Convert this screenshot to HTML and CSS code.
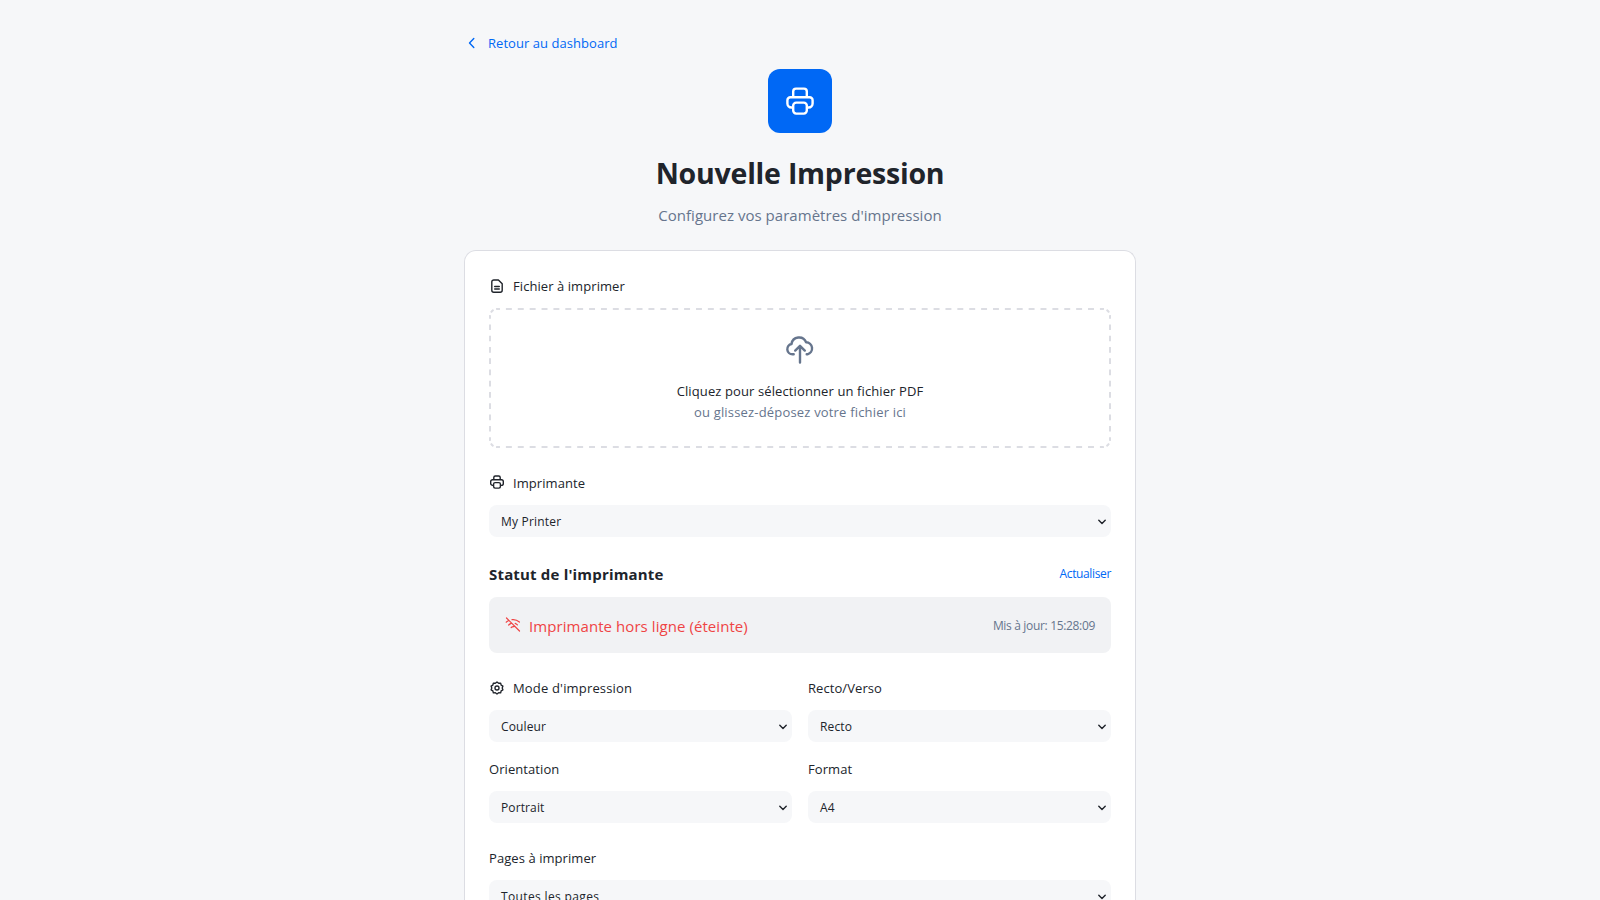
FILE: index.html
```html
<!DOCTYPE html>
<html lang="fr">
<head>
<meta charset="utf-8">
<title>Nouvelle Impression</title>
<link rel="stylesheet" href="styles.css">
</head>
<body>
<main class="page">
  <a class="back"><svg class="back-icon" viewBox="0 0 16 16"><path d="M9.800 3.500 5.500 8l4.300 4.500"/></svg><span class="t-back">Retour au dashboard</span></a>
  <header class="hero">
    <div class="logo"><svg class="logo-icon" viewBox="0 0 32 32"><path d="M9.200 12V6.400a2.800 2.800 0 0 1 2.800-2.800h8a2.800 2.800 0 0 1 2.800 2.800V12M8.400 22.500H7.400a4 4 0 0 1-4-4V15.200a3 3 0 0 1 3-3h19.200a3 3 0 0 1 3 3v3.300a4 4 0 0 1-4 4h-1"/><rect x="9.200" y="17.600" width="13.600" height="11" rx="3"/></svg></div>
    <h1 class="title">Nouvelle Impression</h1>
    <p class="subtitle">Configurez vos paramètres d'impression</p>
  </header>
  <section class="card">
    <div class="label"><svg class="icon" viewBox="0 0 16 16"><path d="M9.400 2H4.800a2 2 0 0 0-2 2v8.300a2 2 0 0 0 2 2h6.400a2 2 0 0 0 2-2V5.800zM5.700 8.500h4.600M5.700 11h4.600"/></svg><span class="t-file">Fichier à imprimer</span></div>
    <div class="dropzone">
      <svg class="dashes" viewBox="0 0 622 140"><path class="dash-h" d="M8 1h606M8 139h606"/><path class="dash-v" d="M1 8v124M621 8v124"/><path class="dash-c" d="M1 8a7 7 0 0 1 7-7M614 1a7 7 0 0 1 7 7M621 132a7 7 0 0 1-7 7M8 139a7 7 0 0 1-7-7"/></svg>
      <svg class="cloud" viewBox="0 0 32 32"><path d="M9.700 22.300H8.400a5.200 5.200 0 0 1-.9-10.300 7.600 7.600 0 0 1 14.600-1.700 6.100 6.100 0 0 1 1.400 12h-.8M16 30.500V14.200M11.200 18.600 16 13.800l4.800 4.800"/></svg>
      <p class="drop-main">Cliquez pour sélectionner un fichier PDF</p>
      <p class="drop-hint">ou glissez-déposez votre fichier ici</p>
    </div>
    <div class="label label-printer"><svg class="icon icon-up" viewBox="0 0 16 16"><path d="M4.800 5.600V3.500a1.500 1.500 0 0 1 1.500-1.500h3.400a1.500 1.500 0 0 1 1.500 1.500v2.100M4.300 11.400H3.700a2 2 0 0 1-2-2V7.600a1.800 1.800 0 0 1 1.800-1.800h9a1.800 1.800 0 0 1 1.800 1.800v1.800a2 2 0 0 1-2 2h-.6"/><rect x="4.600" y="8.600" width="6.800" height="5.500" rx="1.500"/></svg><span class="t-printer">Imprimante</span></div>
    <div class="select"><span class="t-myprinter">My Printer</span><svg class="chev" viewBox="0 0 8 6"><path d="m.8 1.200 3.200 3.200 3.200-3.200"/></svg></div>
    <div class="status-head"><h2 class="status-title">Statut de l'imprimante</h2><a class="refresh">Actualiser</a></div>
    <div class="status-box"><svg class="wifi" viewBox="0 0 16 16"><path d="m1.500 2 13 13M1.200 6.200a12 12 0 0 1 2.500-1.700M7 3.700c2.800-.4 5.300.5 7.400 2.300M3.700 9A7.500 7.500 0 0 1 6 7.400M10.200 7.400c.8.300 1.500.8 2.200 1.500M6.200 11.500a3.500 3.500 0 0 1 2.600-.8"/></svg><span class="status-text">Imprimante hors ligne (éteinte)</span><span class="updated">Mis à jour: 15:28:09</span></div>
    <div class="grid">
      <div class="field"><div class="label"><svg class="icon" viewBox="-.3 -.3 16.600 16.600"><path d="M8 1.800 9.700 3.100l2.100-.2.500 2.100 1.800 1.100L13.400 8l.7 1.900-1.800 1.100-.5 2.100-2.100-.2L8 14.200l-1.700-1.300-2.100.2-.5-2.100-1.800-1.100L2.600 8l-.7-1.900L3.700 5l.5-2.100 2.100.2z"/><circle cx="8" cy="8" r="2.100"/></svg><span class="t-mode">Mode d'impression</span></div><div class="select"><span>Couleur</span><svg class="chev" viewBox="0 0 8 6"><path d="m.8 1.200 3.200 3.200 3.200-3.200"/></svg></div></div>
      <div class="field"><div class="label"><span>Recto/Verso</span></div><div class="select"><span>Recto</span><svg class="chev" viewBox="0 0 8 6"><path d="m.8 1.200 3.200 3.200 3.200-3.200"/></svg></div></div>
      <div class="field"><div class="label"><span>Orientation</span></div><div class="select"><span>Portrait</span><svg class="chev" viewBox="0 0 8 6"><path d="m.8 1.200 3.200 3.200 3.200-3.200"/></svg></div></div>
      <div class="field"><div class="label"><span>Format</span></div><div class="select"><span>A4</span><svg class="chev" viewBox="0 0 8 6"><path d="m.8 1.200 3.200 3.200 3.200-3.200"/></svg></div></div>
    </div>
    <div class="label label-pages"><span>Pages à imprimer</span></div>
    <div class="select"><span class="t-all">Toutes les pages</span><svg class="chev" viewBox="0 0 8 6"><path d="m.8 1.200 3.200 3.200 3.200-3.200"/></svg></div>
  </section>
</main>
</body>
</html>
```
FILE: styles.css
```css
* { box-sizing: border-box; margin: 0; }
html { height: 900px; overflow: hidden; }
body { height: 900px; overflow: hidden; background: #f6f7f9; color: #20242b; font-family: "Open Sans", "Noto Sans", sans-serif; font-size: 13px; line-height: 20px; }
svg { display: block; flex: none; fill: none; stroke: currentColor; stroke-width: 1.4; stroke-linecap: round; stroke-linejoin: round; }
.page { display: flex; flex-direction: column; width: 672px; height: 900px; margin: 0 auto; padding-top: 33px; }
.back { display: flex; align-items: center; width: max-content; letter-spacing: .05px; color: #0068f5; }
.back-icon { width: 16px; height: 16px; margin-right: 8px; }
.hero { display: flex; flex-direction: column; align-items: center; padding-top: 16px; }
.logo { display: grid; place-items: center; width: 64px; height: 64px; border-radius: 12px; background: #0068f5; color: #fff; }
.logo-icon { width: 32px; height: 32px; stroke-width: 2.4; }
.title { margin-top: 20px; font-size: 28.5px; line-height: 40px; font-weight: 700; letter-spacing: -.22px; }
.subtitle { margin-top: 10px; font-size: 15px; line-height: 24px; letter-spacing: .03px; color: #66758d; }
.card { flex: 1; min-height: 0; overflow: hidden; margin-top: 23px; padding: 25px 24px 0; border: 1px solid #dcdde3; border-bottom: 0; border-radius: 12px 12px 0 0; background: #fff; }
.label { display: flex; align-items: center; height: 20px; letter-spacing: .07px; }
.t-mode { letter-spacing: .17px; }
.icon { width: 16px; height: 16px; margin-right: 8px; }
.icon-up { margin-bottom: 2px; }
.dropzone { position: relative; display: flex; flex-direction: column; align-items: center; height: 140px; margin-top: 12px; padding-top: 24px; border-radius: 8px; }
.dashes { position: absolute; inset: 0; width: 622px; height: 140px; color: #dcdde3; stroke-width: 2; stroke-linecap: butt; }
.dash-h { stroke-dasharray: 5.94 5.94; stroke-dashoffset: 2.97; }
.dash-v { stroke-dasharray: 5.64 5.63; stroke-dashoffset: 2.82; }
.dash-c { stroke-dasharray: 1 2.7 3.6 2.7 1 0; }
.cloud { width: 32px; height: 32px; stroke-width: 2.4; color: #66758d; }
.drop-main { margin-top: 17px; letter-spacing: .11px; }
.drop-hint { margin-top: 1px; letter-spacing: .18px; color: #66758d; }
.label-printer { margin-top: 25px; }
.select { display: flex; align-items: center; justify-content: space-between; height: 32px; margin-top: 12px; padding: 1px 5px 0 12px; border-radius: 8px; background: #f6f7f9; font-size: 12px; font-weight: 500; letter-spacing: .12px; }
.select > span { padding-top: 1px; }
.t-myprinter { letter-spacing: .2px; }
.t-all { letter-spacing: .36px; }
.chev { width: 8px; height: 6px; stroke-width: 1.4; }
.status-head { display: flex; justify-content: space-between; margin-top: 25px; height: 23px; }
.status-title { font-size: 15px; line-height: 24px; letter-spacing: .18px; }
.refresh { padding-top: 1px; font-size: 12px; line-height: 22px; letter-spacing: -.36px; color: #0068f5; }
.status-box { display: flex; align-items: center; height: 56px; margin-top: 12px; padding: 0 16px; border-radius: 8px; background: #f1f2f4; }
.wifi { width: 16px; height: 16px; margin-bottom: 3px; stroke-width: 1.2; color: #ef4444; }
.status-text { margin-left: 8px; padding-top: 2px; font-size: 15px; letter-spacing: .07px; color: #ef4444; }
.updated { margin-left: auto; padding-top: 1px; font-size: 12px; letter-spacing: -.33px; color: #66758d; }
.grid { display: grid; grid-template-columns: 1fr 1fr; gap: 17px 16px; margin-top: 25px; }
.label-pages { margin-top: 25px; }
```
